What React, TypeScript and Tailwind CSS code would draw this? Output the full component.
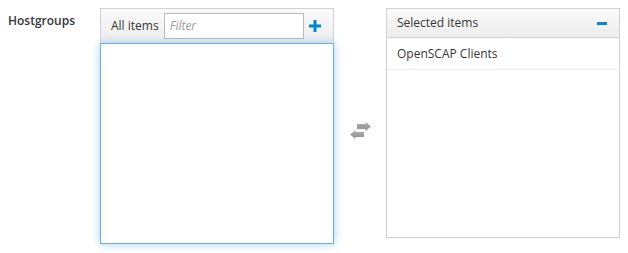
import React from "react";

export default function App() {
  return (
    <div className="w-[628px] h-[253px] bg-white flex pl-2 pt-2 text-[12px] text-[#363636]" style={{ fontFamily: '"Open Sans", "Noto Sans", sans-serif' }}>
      <div className="w-[92px] pt-[4px] font-semibold text-[12px] text-[#363636]">Hostgroups</div>
      <div className="w-[234px] flex flex-col">
        <div className="h-[35px] border border-[#d1d1d1] border-b-0 bg-gradient-to-b from-[#fafafa] to-[#ededed] flex items-center pl-[10px] pr-[12px]">
          <span className="mr-[5px]">All items</span>
          <div className="w-[140px] h-[26px] border border-[#bbbbbb] bg-white flex items-center px-[5px] italic text-[#999999]">Filter</div>
          <span className="ml-auto">
            <svg width="12" height="12" viewBox="0 0 12 12">
              <rect x="0" y="4.5" width="12" height="3" fill="#0088ce" />
              <rect x="4.5" y="0" width="3" height="12" fill="#0088ce" />
            </svg>
          </span>
        </div>
        <div className="h-[201px] border border-[#66afe9] bg-white shadow-[0_0_8px_rgba(102,175,233,0.6)]"></div>
      </div>
      <div className="w-[52px] flex items-center justify-center pl-[1px]">
        <svg width="23" height="17" viewBox="0 0 23 17">
          <defs>
            <linearGradient id="g" x1="0" y1="0" x2="0" y2="1">
              <stop offset="0" stopColor="#b0b0b0" />
              <stop offset="1" stopColor="#8e8e8e" />
            </linearGradient>
          </defs>
          <path d="M8 2 H16.5 V0 L22 4.5 L16.5 9 V7 H8 Z" fill="url(#g)" />
          <path d="M15 10 H6.5 V8 L1 12.5 L6.5 17 V15 H15 Z" fill="url(#g)" />
        </svg>
      </div>
      <div className="w-[234px] h-[230px] border border-[#d1d1d1] flex flex-col">
        <div className="h-[29px] bg-gradient-to-b from-[#fafafa] to-[#ededed] border-b border-[#d1d1d1] flex items-center pl-[10px] pr-[12px]">
          <span>Selected items</span>
          <span className="ml-auto">
            <svg width="10" height="3" viewBox="0 0 10 3">
              <rect x="0" y="0" width="10" height="3" fill="#0088ce" />
            </svg>
          </span>
        </div>
        <div className="h-[32px] border-b border-[#ededed] flex items-center pl-[10px]">OpenSCAP Clients</div>
      </div>
    </div>
  );
}
